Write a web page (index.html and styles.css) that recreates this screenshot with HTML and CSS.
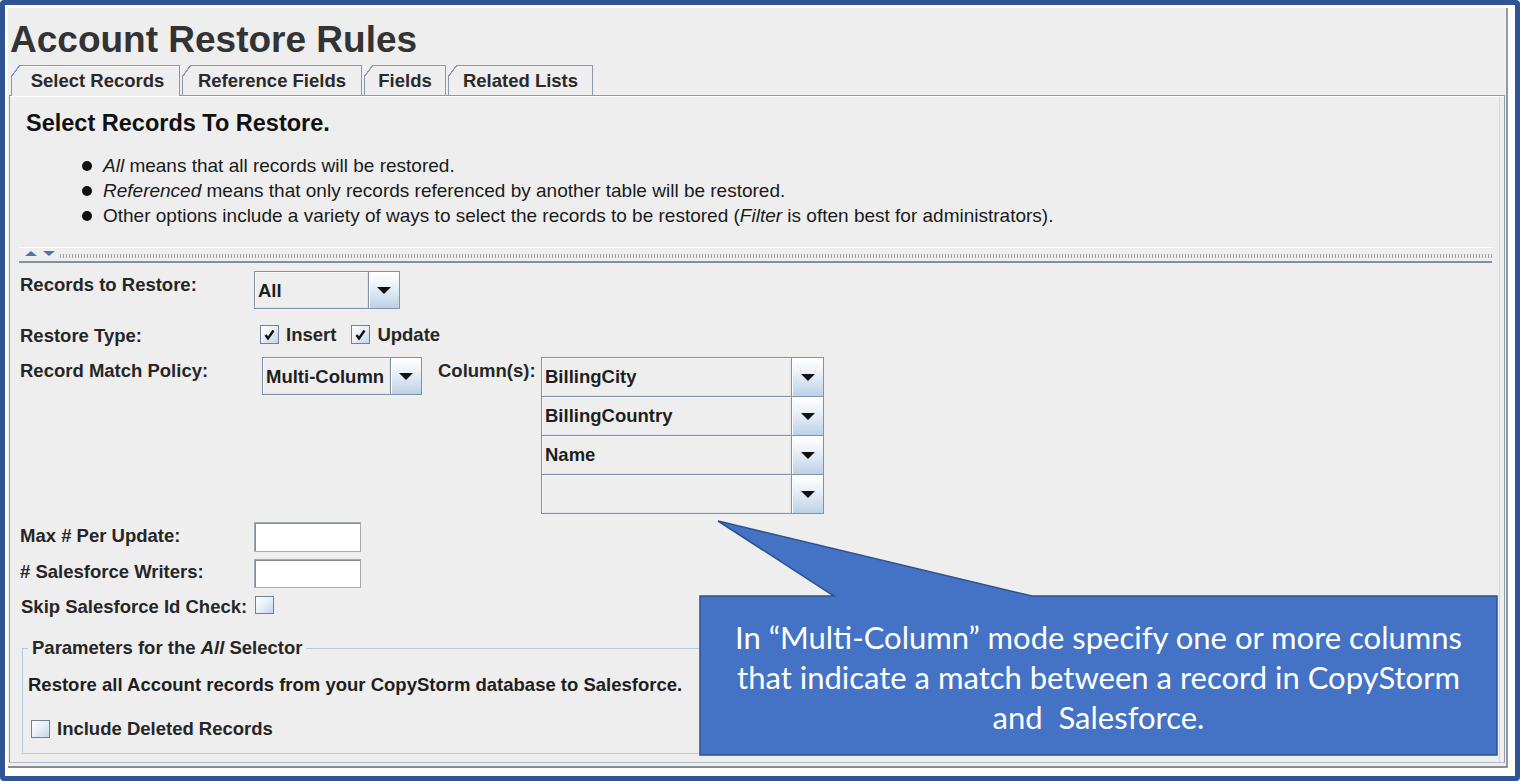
FILE: index.html
```html
<!DOCTYPE html>
<html>
<head>
<meta charset="utf-8">
<title>Account Restore Rules</title>
<link rel="stylesheet" href="styles.css">
</head>
<body>
<div class="frame">
  <div class="window">
    <h1 class="title">Account Restore Rules</h1>
    <div class="tabs">
      <div class="tab active w1">Select Records</div>
      <div class="tab w2">Reference Fields</div>
      <div class="tab w3">Fields</div>
      <div class="tab w4">Related Lists</div>
    </div>
    <div class="panel">
      <div class="intro">
        <h2>Select Records To Restore.</h2>
        <ul class="bullets">
          <li><i>All</i> means that all records will be restored.</li>
          <li><i>Referenced</i> means that only records referenced by another table will be restored.</li>
          <li>Other options include a variety of ways to select the records to be restored (<i>Filter</i> is often best for administrators).</li>
        </ul>
      </div>
      <div class="splitter">
        <svg class="split-arrows" width="34" height="6" viewBox="0 0 34 6">
          <polygon points="0,5 6,0 12,5" fill="#4f72ad"/>
          <polygon points="18,0 30,0 24,5" fill="#4f72ad"/>
        </svg>
        <div class="dots"></div>
      </div>
      <div class="form">
        <div class="row r1">
          <span class="lbl">Records to Restore:</span>
          <div class="combo c-all">
            <span class="val">All</span>
            <span class="btn"><span class="arrow"></span></span>
          </div>
        </div>
        <div class="row r2">
          <span class="lbl">Restore Type:</span>
          <label class="chk first"><span class="box"><svg width="13" height="13" viewBox="0 0 13 13"><path d="M2.5 7 L5 10.5 L10.5 2.5" fill="none" stroke="#111" stroke-width="2.4"/></svg></span>Insert</label>
          <label class="chk"><span class="box"><svg width="13" height="13" viewBox="0 0 13 13"><path d="M2.5 7 L5 10.5 L10.5 2.5" fill="none" stroke="#111" stroke-width="2.4"/></svg></span>Update</label>
        </div>
        <div class="row r3">
          <span class="lbl">Record Match Policy:</span>
          <div class="combo c-policy">
            <span class="val">Multi-Column</span>
            <span class="btn"><span class="arrow"></span></span>
          </div>
          <span class="col-lbl">Column(s):</span>
          <div class="col-stack">
            <div class="combo c-col"><span class="val">BillingCity</span><span class="btn"><span class="arrow"></span></span></div>
            <div class="combo c-col"><span class="val">BillingCountry</span><span class="btn"><span class="arrow"></span></span></div>
            <div class="combo c-col"><span class="val">Name</span><span class="btn"><span class="arrow"></span></span></div>
            <div class="combo c-col"><span class="val"></span><span class="btn"><span class="arrow"></span></span></div>
          </div>
        </div>
        <div class="row r4">
          <span class="lbl">Max # Per Update:</span>
          <span class="field"></span>
        </div>
        <div class="row r5">
          <span class="lbl"># Salesforce Writers:</span>
          <span class="field f2"></span>
        </div>
        <div class="row r6">
          <span class="lbl skip">Skip Salesforce Id Check:</span>
          <span class="box empty"></span>
        </div>
        <fieldset class="group">
          <legend>Parameters for the <i>All</i> Selector</legend>
          <p class="group-text">Restore all Account records from your CopyStorm database to Salesforce.</p>
          <label class="chk deleted"><span class="box empty"></span>Include Deleted Records</label>
        </fieldset>
      </div>
    </div>
  </div>
  <div class="callout">
    <svg class="callout-shape" width="800" height="238" viewBox="0 0 800 238">
      <path d="M1 77 H135 L19 2 L333 77 H798 V236 H1 Z" fill="#4472c4" stroke="#2f528f" stroke-width="1.5" stroke-linejoin="miter"/>
    </svg>
    <div class="callout-text">In “Multi-Column” mode specify one or more columns<br>that indicate a match between a record in CopyStorm<br>and&nbsp; Salesforce.</div>
  </div>
</div>
</body>
</html>
```

FILE: styles.css
```css
html, body {
  margin: 0;
  padding: 0;
  background: #ffffff;
}

.frame {
  position: relative;
  width: 1520px;
  height: 781px;
  box-sizing: border-box;
  border: 5px solid #2f5597;
  border-radius: 4px;
  background: #ffffff;
  padding: 3px 7px 8px 3px;
  font-family: "Liberation Sans", Arial, sans-serif;
  color: #222;
}

.window {
  height: 100%;
  box-sizing: border-box;
  display: flex;
  flex-direction: column;
  background: #eeeeee;
  border-right: 2px solid #9a9a9a;
  border-bottom: 2px solid #8c8c8c;
  padding-left: 1px;
  padding-right: 1px;
}

.title {
  margin: 0;
  height: 57px;
  box-sizing: border-box;
  padding: 7px 0 0 1px;
  font-size: 37px;
  line-height: 50px;
  font-weight: bold;
  color: #333333;
}

.tabs {
  display: flex;
  align-items: flex-end;
  gap: 2px;
  height: 30px;
  padding-left: 2px;
  position: relative;
  z-index: 1;
}

.tab {
  position: relative;
  height: 30px;
  box-sizing: border-box;
  border: 1px solid #8c99a8;
  border-bottom: none;
  background: #eeeeee;
  font-size: 18.5px;
  font-weight: bold;
  line-height: 29px;
  text-align: center;
  color: #2a2a2a;
}

.tab::before {
  content: "";
  position: absolute;
  left: -1px;
  top: -1px;
  width: 9px;
  height: 12px;
  background: linear-gradient(to bottom right, #eeeeee calc(50% - 0.8px), #8c99a8 calc(50% - 0.5px), #8c99a8 calc(50% + 0.5px), transparent calc(50% + 0.8px));
}

.tab.active {
  height: 31px;
  margin-bottom: -1px;
  border-color: #7b97c7;
  box-shadow: inset 0 1px 0 #ffffff;
  padding-left: 4px;
}

.tab.active::before {
  background: linear-gradient(to bottom right, #eeeeee calc(50% - 0.8px), #7b97c7 calc(50% - 0.5px), #7b97c7 calc(50% + 0.5px), transparent calc(50% + 0.8px));
}

.w1 { width: 169px; }
.w2 { width: 180px; }
.w3 { width: 82px; }
.w4 { width: 145px; }

.panel {
  flex: 1;
  margin-bottom: 3px;
  border: 1px solid #7e9ac8;
  border-right-color: #8da0ba;
  border-bottom-color: #b0bccb;
  box-shadow: inset 0 1px 0 #ffffff, inset -4px 0 0 #eeeeee, inset -5px 0 0 #d6d6d6;
  position: relative;
}

.intro {
  padding: 13px 0 19px 16px;
}

.intro h2 {
  margin: 0;
  font-size: 23.5px;
  line-height: 28px;
  font-weight: bold;
  color: #111;
}

.bullets {
  list-style: none;
  margin: 16px 0 0 0;
  padding: 0 0 0 77px;
  font-size: 19px;
  line-height: 25px;
  color: #1a1a1a;
}

.bullets li::before {
  content: "";
  display: inline-block;
  width: 10px;
  height: 10px;
  border-radius: 50%;
  background: #111;
  margin-left: -21px;
  margin-right: 11px;
  vertical-align: 1px;
}

.splitter {
  margin: 0 12px 0 9px;
  height: 16px;
  box-sizing: border-box;
  border-top: 1px solid #ffffff;
  border-bottom: 2px solid #7f90a4;
  display: flex;
  align-items: center;
  padding-left: 6px;
}

.split-arrows {
  display: block;
  flex: none;
  margin-top: -2px;
}

.dots {
  flex: 1;
  height: 4px;
  margin-top: 3px;
  background-image: radial-gradient(circle, #98a3b0 0.8px, transparent 1.1px);
  background-size: 3px 2px;
}

.form {
  padding-left: 10px;
}

.row {
  display: flex;
  align-items: flex-start;
}

.lbl {
  width: 234px;
  flex: none;
  font-size: 18.5px;
  font-weight: bold;
  color: #262626;
}

.r1 { margin-top: 8px; height: 38px; }
.r1 .lbl { line-height: 28px; }

.r2 { margin-top: 16px; height: 19px; }
.r2 .lbl { line-height: 22px; }

.r3 { margin-top: 13px; }
.r3 .lbl { line-height: 28px; }

.r4 { margin-top: 8px; height: 30px; }
.r4 .lbl { line-height: 28px; }

.r5 { margin-top: 7px; height: 29px; }
.r5 .lbl { line-height: 26px; }

.r6 { margin-top: 8px; height: 22px; }
.r6 .lbl { line-height: 22px; padding-left: 1px; }

.combo {
  display: flex;
  box-sizing: border-box;
  height: 38px;
  border: 1px solid #8293a8;
  background: #eeeeee;
  flex: none;
}

.combo .val {
  flex: 1;
  box-sizing: border-box;
  border-right: 1px solid #8293a8;
  box-shadow: inset 1px 1px 0 #f8f8f8, inset -1px -1px 0 #dfe4ea;
  padding-left: 3px;
  font-size: 18.5px;
  font-weight: bold;
  line-height: 38px;
  color: #1e1e1e;
  white-space: nowrap;
  overflow: hidden;
}

.combo .btn {
  width: 30px;
  flex: none;
  display: flex;
  align-items: center;
  justify-content: center;
  background: linear-gradient(#ffffff 0%, #eef3f9 35%, #bcd1e6 100%);
  box-shadow: inset 1px 1px 0 #ffffff;
}

.arrow {
  width: 0;
  height: 0;
  border-left: 7px solid transparent;
  border-right: 7px solid transparent;
  border-top: 7px solid #111;
}

.c-all { width: 146px; }
.c-policy { width: 160px; margin-left: 8px; }

.col-lbl {
  width: 103px;
  flex: none;
  margin-left: 16px;
  font-size: 18.5px;
  font-weight: bold;
  line-height: 28px;
  color: #262626;
}

.col-stack {
  display: flex;
  flex-direction: column;
}

.c-col {
  width: 283px;
  height: 40px;
  margin-top: -1px;
}

.c-col:first-child { margin-top: 0; }

.c-col .val { line-height: 38px; }

.c-col .btn { width: 31px; }

.chk {
  display: flex;
  align-items: center;
  font-size: 18.5px;
  font-weight: bold;
  color: #262626;
  line-height: 19px;
}

.chk.first { margin-left: 6px; margin-right: 15px; }

.box {
  width: 19px;
  height: 19px;
  box-sizing: border-box;
  border: 1px solid #6f8299;
  background: linear-gradient(135deg, #ffffff 0%, #e6eef7 50%, #c4d5e8 100%);
  display: inline-flex;
  align-items: center;
  justify-content: center;
  margin-right: 7px;
  flex: none;
}

.box svg { display: block; }

.box.empty {
  width: 19px;
  height: 18px;
}

.field {
  display: block;
  width: 107px;
  height: 30px;
  box-sizing: border-box;
  background: #ffffff;
  border: 1px solid #a4abb4;
  box-shadow: inset 1px 1px 0 #8a8a8a;
}

.field.f2 { height: 29px; }

.group {
  margin: 20px 12px 0 2px;
  padding: 0 0 15px 5px;
  border: 1px solid #b6c9dd;
  min-width: 0;
}

.group legend {
  padding: 0 4px;
  font-size: 18.5px;
  font-weight: bold;
  line-height: 20px;
  color: #262626;
}

.group-text {
  margin: 16px 0 0 0;
  font-size: 18.5px;
  font-weight: bold;
  line-height: 22px;
  color: #1e1e1e;
}

.chk.deleted {
  margin-top: 23px;
  margin-left: 3px;
}

.callout {
  position: absolute;
  left: 694px;
  top: 514px;
  width: 800px;
  height: 238px;
}

.callout-shape {
  display: block;
}

.callout-text {
  position: absolute;
  left: 1px;
  top: 98px;
  width: 797px;
  text-align: center;
  font-family: Lato, "Open Sans", sans-serif;
  font-size: 31px;
  line-height: 40px;
  color: #ffffff;
}
```
